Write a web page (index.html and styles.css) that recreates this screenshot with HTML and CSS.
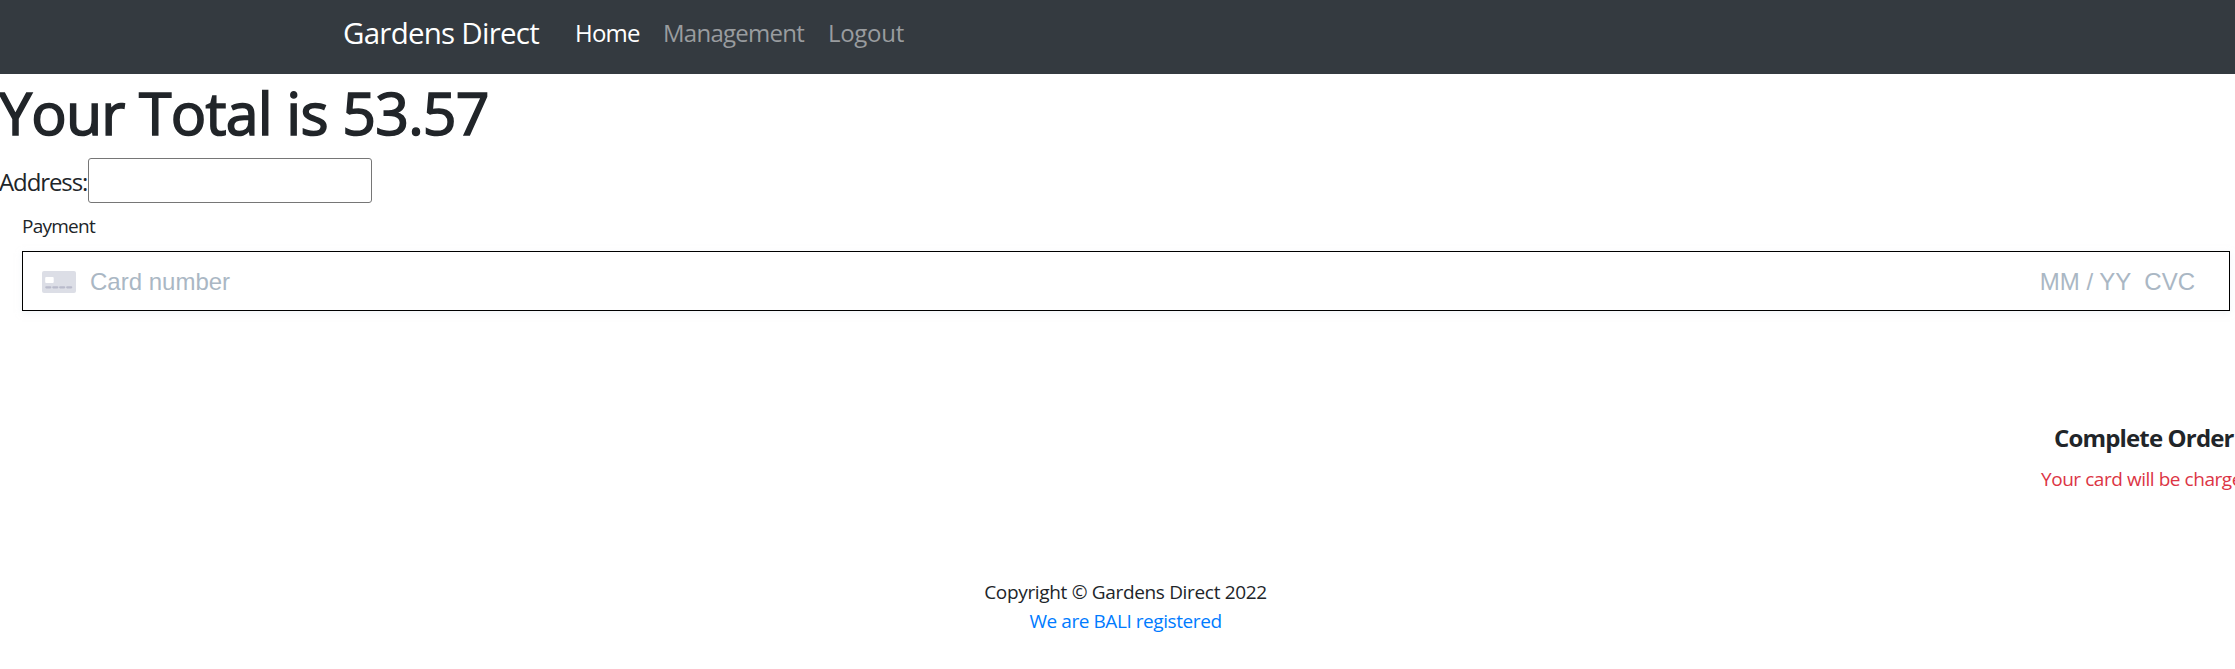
FILE: index.html
```html
<!DOCTYPE html>
<html lang="en">
<head>
<meta charset="utf-8">
<title>Gardens Direct</title>
<link rel="stylesheet" href="styles.css">
</head>
<body>
<nav class="navbar">
  <a class="brand">Gardens Direct</a>
  <a class="link home">Home</a>
  <a class="link management">Management</a>
  <a class="link logout">Logout</a>
</nav>
<main>
  <h1 class="total">Your Total is 53.57</h1>
  <div class="address"><label class="address-label" for="address">Address:</label><input class="address-input" id="address" type="text"></div>
  <section class="payment">
    <div class="legend">Payment</div>
    <div class="card">
      <svg class="card-icon" width="34" height="22" viewBox="0 0 34 22">
        <rect width="34" height="22" rx="2" fill="#dcdee6"/>
        <rect x="3.2" y="6" width="8.5" height="6" rx="1" fill="#fff"/>
        <path d="M4.3 16.3h4M11.3 16.3h4M18.2 16.3h4M25.2 16.3h4" stroke="#b9bbcb" stroke-width="2.2" stroke-linecap="round"/>
      </svg>
      <span class="number">Card number</span>
      <span class="expiry">MM / YY</span>
      <span class="cvc">CVC</span>
    </div>
  </section>
  <section class="submit">
    <div class="order">Complete Order</div>
    <div class="warning">Your card will be charged</div>
  </section>
</main>
<footer class="footer">
  <div class="copy">Copyright © Gardens Direct 2022</div>
  <a class="bali">We are BALI registered</a>
</footer>
</body>
</html>
```
FILE: styles.css
```css
* { box-sizing: border-box; }
body {
  margin: 0;
  overflow: hidden;
  background: #fff;
  color: #212529;
  font: 400 24px/36px "Open Sans", "Noto Sans", sans-serif;
  white-space: nowrap;
}
.navbar { display: flex; height: 74px; padding: 15px 0 0 343px; background: #343a40; }
.brand { width: 232px; font-size: 29.5px; color: #fff; letter-spacing: -0.75px; }
.link { color: #999c9f; }
.home { width: 88px; color: #fff; letter-spacing: -0.8px; }
.management { width: 165px; letter-spacing: -0.75px; }
.logout { letter-spacing: -0.3px; }
.total {
  margin: 0;
  height: 84px;
  padding-top: 2px;
  font-size: 59px;
  line-height: 72px;
  font-weight: 400;
  letter-spacing: -0.8px;
  text-indent: -1px;
  -webkit-text-stroke: 1.6px #212529;
}
.address { display: flex; height: 45px; }
.address-label { width: 88px; padding-top: 6px; letter-spacing: -1.1px; text-indent: -1px; }
.address-input { width: 284px; height: 45px; border: 1px solid #767676; border-radius: 3px; background: #fff; }
.payment { height: 171px; padding: 8px 5px 0 22px; }
.legend { height: 40px; font-size: 19px; line-height: 30px; letter-spacing: -0.75px; }
.card {
  display: flex;
  align-items: center;
  height: 60px;
  padding: 2px 34px 0 19px;
  border: 1px solid #000;
  box-shadow: 0 2px 6px #e6ebf180;
  color: #aab7c4;
  font-family: "Liberation Sans", Arial, sans-serif;
}
.number { flex: 1; margin-left: 14px; }
.expiry { margin-right: 13px; }
.submit { height: 204px; padding: 46px 0 0 2041px; }
.order { padding-left: 13px; font-weight: 700; letter-spacing: -0.85px; }
.warning { margin-top: 8px; color: #dc3545; font-size: 19px; line-height: 30px; letter-spacing: -0.45px; }
.footer { padding-left: 16px; text-align: center; font-size: 19px; line-height: 29px; letter-spacing: -0.33px; }
.bali { color: #007bff; letter-spacing: -0.43px; }
```
